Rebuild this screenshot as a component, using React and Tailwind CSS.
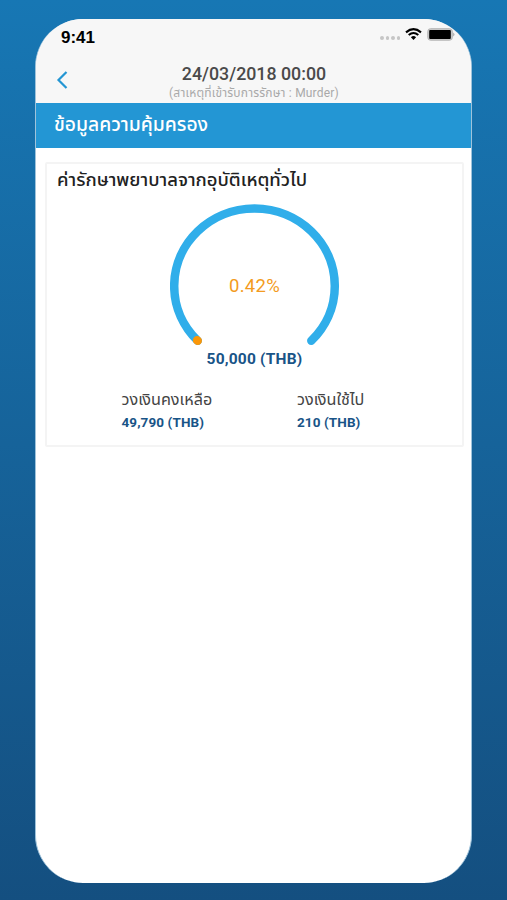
const latin = "font-['Roboto','Noto_Sans_Thai','Noto_Sans',sans-serif]";

function StatusBar() {
  return (
    <div className="flex h-[38px] items-center justify-between pl-[25px] pr-[16px] font-['Liberation_Sans',sans-serif]">
      <span className="text-[17px] leading-[20px] font-bold text-black">9:41</span>
      <div className="-mt-[8px] flex items-center">
        <div className="mt-[8px] mr-[5px] flex gap-[2px]">
          <i className="size-[3.4px] rounded-full bg-[#c6c6c6]" />
          <i className="size-[3.4px] rounded-full bg-[#c6c6c6]" />
          <i className="size-[3.4px] rounded-full bg-[#c6c6c6]" />
          <i className="size-[3.4px] rounded-full bg-[#c6c6c6]" />
        </div>
        <svg className="mr-[5px] h-[12px] w-[17px]" viewBox="0 0 17 12">
          <path d="M1 4.4Q8.500-2 16 4.400M3.700 7Q8.500 3 13.300 7" fill="none" stroke="#000" strokeWidth="2.100" />
          <path d="M5.900 9.200Q8.500 7 11.100 9.200L8.500 11.900Z" />
        </svg>
        <svg className="h-[13px] w-[28px]" viewBox="0 0 28 13">
          <rect x="0.800" y="0.700" width="24.500" height="11.500" rx="2.700" fill="#ccc" stroke="#b4b4b4" />
          <rect x="2.200" y="2" width="21.600" height="9" rx="1" />
          <path d="M26.300 4.500Q28.500 6.500 26.300 8.500Z" fill="#999" />
        </svg>
      </div>
    </div>
  );
}

function NavBar() {
  return (
    <div className="flex h-[46px] items-start">
      <svg className="mt-[13px] ml-[19px] h-[20px] w-[14px]" viewBox="0 0 14 20" fill="none" stroke="#2496d3" strokeWidth="2.200">
        <path d="M11.500 2L3.500 10L11.500 18" />
      </svg>
      <div className="mr-[32px] flex flex-1 flex-col items-center whitespace-nowrap">
        <div className="mt-[6px] text-[17.800px] leading-[22px] font-medium text-[#4a4a4a]">24/03/2018 00:00</div>
        <div className="text-[12px] leading-[17px] tracking-[0.2px] text-[#a9a9a9]">(สาเหตุที่เข้ารับการรักษา : Murder)</div>
      </div>
    </div>
  );
}

function Gauge() {
  return (
    <div className="mx-auto mt-[9px] grid h-[144px] w-[170px] place-items-center">
      <svg className="col-start-1 row-start-1 h-[144px] w-[170px]" viewBox="0.500 -0.300 170 144" fill="none" strokeWidth="8.500" strokeLinecap="round">
        <path d="M28.200 137.500A80.300 77.500 0 1 1 141.800 137.500" stroke="#30aeea" />
        <path d="M28.200 137.500L27.600 136.900" stroke="#fb9708" />
      </svg>
      <span className="col-start-1 row-start-1 mt-[22px] text-[18.500px] leading-[22px] tracking-[0.3px] text-[#f39b21]">0.42%</span>
    </div>
  );
}

function Amount({ label, value }) {
  return (
    <div className="w-[175.500px] shrink-0 whitespace-nowrap">
      <div className="text-[16.200px] leading-[24px] text-[#444]">{label}</div>
      <div className="text-[13.500px] leading-[20px] font-bold tracking-[0.1px] text-[#195487]">{value}</div>
    </div>
  );
}

export default function App() {
  return (
    <div className={`h-[900px] w-[507px] overflow-hidden bg-linear-to-b from-[#1777b4] to-[#144f80] pt-[19px] pl-[35px] ${latin}`}>
      <main className="h-[864px] w-[437px] overflow-hidden rounded-[48px] border-x border-[#9fc3db] bg-white">
        <header className="h-[84px] bg-[#f7f7f7]">
          <StatusBar />
          <NavBar />
        </header>
        <div className="flex h-[45px] items-center bg-[#2396d4] pl-[18px] text-[19.300px] font-medium whitespace-nowrap text-white">
          ข้อมูลความคุ้มครอง
        </div>
        <section className="mr-[7px] ml-[9px] mt-[14px] h-[285px] rounded-[2px] border-2 border-[#f4f4f4] bg-white">
          <h1 className="mt-[4px] h-[26px] pl-[10px] text-[18.500px] leading-[25px] font-medium whitespace-nowrap text-[#222]">
            ค่ารักษาพยาบาลจากอุบัติเหตุทั่วไป
          </h1>
          <Gauge />
          <div className="mt-[2px] text-center text-[15.500px] leading-[20px] font-bold tracking-[0.2px] text-[#195487]">50,000 (THB)</div>
          <div className="mt-[19px] flex pl-[74.500px]">
            <Amount label="วงเงินคงเหลือ" value="49,790 (THB)" />
            <Amount label="วงเงินใช้ไป" value="210 (THB)" />
          </div>
        </section>
      </main>
    </div>
  );
}
